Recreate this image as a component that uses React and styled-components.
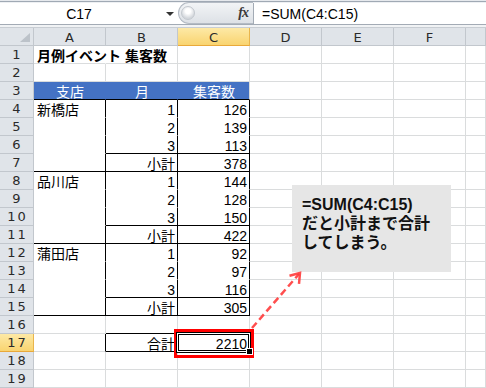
import React from 'react';
import styled, { createGlobalStyle } from 'styled-components';

const GRID = '#dadcdd';
const BLACK = '#000';
const BLUE = '#4472c4';
const WHITE = '#fff';
const HEAD_LINE = '#c2c7cd';

const GlobalStyle = createGlobalStyle`
  html, body {
    margin: 0;
    padding: 0;
    background: #fff;
  }
  body {
    font-family: "Liberation Sans", "Noto Sans CJK JP", sans-serif;
  }
`;

const Screen = styled.div`
  position: relative;
  width: 486px;
  height: 388px;
  overflow: hidden;
  background: #fff;
`;

const FormulaBar = styled.div`
  display: flex;
  height: 25px;
  box-sizing: border-box;
  padding-top: 3px;
  border-bottom: 1px solid #a3abb5;
  background: linear-gradient(#e6e9ed 0 1px, #a0a9b4 1px 2px, #eef0f3 2px 3px, #fff 3px);
`;

const NameBox = styled.div`
  position: relative;
  width: 178px;
  display: flex;
  align-items: center;
  font-size: 14px;
  color: #000;
`;

const NameText = styled.span`
  width: 158px;
  text-align: center;
`;

const DropArrow = styled.span`
  width: 0;
  height: 0;
  margin-left: 8px;
  border-left: 4px solid transparent;
  border-right: 4px solid transparent;
  border-top: 4px solid #333;
`;

const FxPill = styled.div`
  position: relative;
  width: 75px;
  box-sizing: border-box;
  display: flex;
  align-items: center;
  justify-content: space-between;
  padding: 0 3px 0 2px;
  margin-top: -1px;
  border: 1px solid #b4bbc4;
  border-right: none;
  border-radius: 11px 0 0 11px;
  background: linear-gradient(#f2f4f6, #dde1e6);
`;

const Knob = styled.span`
  width: 12px;
  height: 12px;
  border-radius: 50%;
  border: 1px solid #c3c8ce;
  background: radial-gradient(circle at 50% 35%, #ffffff 0 25%, #d3d7dc 70%);
`;

const FxLabel = styled.span`
  font-family: "Liberation Serif", serif;
  font-style: italic;
  font-weight: 700;
  font-size: 14px;
  color: #3a3a3a;
  letter-spacing: -1px;
  padding-right: 2px;
`;

const FormulaInput = styled.div`
  flex: 1;
  display: flex;
  align-items: center;
  padding-left: 8px;
  border-left: 1px solid #a3abb5;
  font-size: 14px;
  color: #000;
  background: #fff;
`;

const Gap = styled.div`
  height: 3px;
  box-sizing: border-box;
  background: #f1f3f5;
  border-bottom: 1px solid #c8cdd3;
`;

const Sheet = styled.div`
  display: grid;
  grid-template-columns: 34px repeat(6, 72px) 20px;
  grid-auto-rows: 18px;
`;

const Header = styled.div`
  position: relative;
  box-sizing: border-box;
  padding-top: 2px;
  line-height: 16px;
  text-align: center;
  font-family: "DejaVu Sans", sans-serif;
  font-size: 13px;
  color: #2a2a2a;
  background: ${p => (p.$active ? 'linear-gradient(#fde9a6, #f9d470)' : '#e0e4e9')};
  border-right: 1px solid ${p => (p.$active ? '#e9b54c' : HEAD_LINE)};
  border-bottom: 1px solid ${p => (p.$active ? '#e9a93a' : HEAD_LINE)};
`;

const RowHead = styled(Header)`
  padding-top: 1px;
  padding-left: 2px;
  letter-spacing: 2px;
`;

const Corner = styled(Header)`
  &::after {
    content: '';
    position: absolute;
    right: 3px;
    bottom: 3px;
    border-left: 10px solid transparent;
    border-bottom: 9px solid #bcc2c9;
  }
`;

const Cell = styled.div`
  position: relative;
  box-sizing: border-box;
  padding: 2px 2px 0 3px;
  line-height: 17px;
  font-size: 14px;
  white-space: nowrap;
  text-align: ${p => p.$align};
  font-weight: ${p => (p.$bold ? 700 : 400)};
  color: ${p => p.$color || '#000'};
  background: ${p => p.$bg};
  border-right: 1px solid ${p => p.$rb};
  border-bottom: 1px solid ${p => p.$bb};
  z-index: ${p => (p.$over ? 2 : 'auto')};
`;

const Selection = styled.div`
  position: absolute;
  top: -2px;
  left: -2px;
  right: -2px;
  bottom: -2px;
  border: 1px solid #000;
  box-shadow: inset 0 0 0 1px #fff, inset 0 0 0 2px #000;
  pointer-events: none;
`;

const FillHandle = styled.span`
  position: absolute;
  right: -3px;
  bottom: -3px;
  width: 5px;
  height: 5px;
  background: #000;
  border: 1px solid #fff;
`;

const RedFrame = styled.div`
  position: absolute;
  left: 174px;
  top: 329px;
  width: 80px;
  height: 29px;
  box-sizing: border-box;
  border: 3px solid #ff0000;
  pointer-events: none;
`;

const Callout = styled.div`
  position: absolute;
  left: 292px;
  top: 185px;
  width: 159px;
  height: 87px;
  box-sizing: border-box;
  padding: 10px 0 0 10px;
  background: #e6e6e6;
  font-size: 16px;
  font-weight: 700;
  line-height: 19px;
  color: #111;
  white-space: nowrap;
`;

const ArrowLayer = styled.svg`
  position: absolute;
  left: 0;
  top: 0;
  pointer-events: none;
`;

const COLS = ['A', 'B', 'C', 'D', 'E', 'F', ''];

const body = {
  4: ['新橋店', '1', '126'],
  5: ['', '2', '139'],
  6: ['', '3', '113'],
  7: ['', '小計', '378'],
  8: ['品川店', '1', '144'],
  9: ['', '2', '128'],
  10: ['', '3', '150'],
  11: ['', '小計', '422'],
  12: ['蒲田店', '1', '92'],
  13: ['', '2', '97'],
  14: ['', '3', '116'],
  15: ['', '小計', '305'],
  17: ['', '合計', '2210'],
};

function cellSpec(r, c) {
  const s = { text: '', align: 'left', bg: WHITE, rb: GRID, bb: GRID };
  if (r === 1 && c === 0) {
    s.text = '月例イベント 集客数';
    s.bold = true;
    s.rb = WHITE;
    s.over = true;
  }
  if (r === 3 && c < 3) {
    s.text = ['支店', '月', '集客数'][c];
    s.align = 'center';
    s.color = WHITE;
    s.bg = BLUE;
    s.rb = c < 2 ? BLUE : GRID;
    s.bb = BLACK;
  }
  if (r >= 4 && r <= 15 && c < 3) {
    const sub = (r - 3) % 4 === 0;
    const pre = (r - 3) % 4 === 3;
    s.rb = BLACK;
    s.bb = sub || (pre && c > 0) ? BLACK : WHITE;
  }
  if (r === 16 && (c === 1 || c === 2)) s.bb = BLACK;
  if (r === 17 && c < 3) {
    s.rb = BLACK;
    if (c > 0) s.bb = BLACK;
  }
  const row = body[r];
  if (row && c < 3 && row[c]) {
    s.text = row[c];
    if (c > 0) s.align = 'right';
  }
  if (r === 17 && c === 2) {
    s.selected = true;
    s.over = true;
  }
  return s;
}

const rows = Array.from({ length: 19 }, (_, i) => i + 1);

export default function App() {
  return (
    <Screen>
      <GlobalStyle />
      <FormulaBar>
        <NameBox>
          <NameText>C17</NameText>
          <DropArrow />
        </NameBox>
        <FxPill>
          <Knob />
          <FxLabel>fx</FxLabel>
        </FxPill>
        <FormulaInput>=SUM(C4:C15)</FormulaInput>
      </FormulaBar>
      <Gap />
      <Sheet>
        <Corner />
        {COLS.map((name, i) => (
          <Header key={'h' + i} $active={name === 'C'}>{name}</Header>
        ))}
        {rows.map(r => (
          <React.Fragment key={r}>
            <RowHead $active={r === 17}>{r}</RowHead>
            {COLS.map((_, c) => {
              const s = cellSpec(r, c);
              return (
                <Cell
                  key={c}
                  $align={s.align}
                  $bold={s.bold}
                  $color={s.color}
                  $bg={s.bg}
                  $rb={s.rb}
                  $bb={s.bb}
                  $over={s.over}
                >
                  {s.text}
                  {s.selected && (
                    <Selection>
                      <FillHandle />
                    </Selection>
                  )}
                </Cell>
              );
            })}
          </React.Fragment>
        ))}
      </Sheet>
      <Callout>
        =SUM(C4:C15)
        <br />
        だと小計まで合計
        <br />
        してしまう。
      </Callout>
      <RedFrame />
      <ArrowLayer width="486" height="388" viewBox="0 0 486 388">
        <g stroke="#ff3b3b" strokeOpacity="0.9" strokeWidth="2.5" fill="none" strokeLinecap="butt">
          <line x1="252" y1="328" x2="299" y2="274" strokeDasharray="7 4" />
          <polyline points="289.5,275.8 300,273 299,283.8" strokeLinejoin="miter" />
        </g>
      </ArrowLayer>
    </Screen>
  );
}
